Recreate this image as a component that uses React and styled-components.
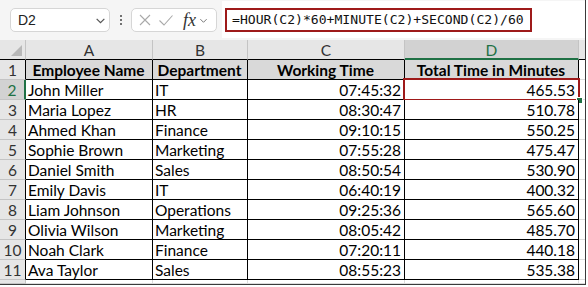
import React from "react";
import styled, { createGlobalStyle } from "styled-components";

const GREEN = "#1f7145";
const RED = "#9e1a1a";
const CELL_FONT = `"Lato", "Liberation Sans", sans-serif`;

const Global = createGlobalStyle`
  html, body {
    margin: 0;
    padding: 0;
    background: #ffffff;
  }
`;

const Frame = styled.div`
  width: 585px;
  height: 284px;
  border-right: 1px solid #3a3a3a;
  border-bottom: 1px solid #3a3a3a;
  background: #f5f5f5;
  overflow: hidden;
  display: flex;
  flex-direction: column;
`;

/* ---- formula bar ---- */

const Toolbar = styled.div`
  height: 40px;
  flex: none;
  display: flex;
  align-items: center;
  padding-left: 10px;
  box-sizing: border-box;
`;

const NameBox = styled.div`
  width: 100px;
  height: 24px;
  box-sizing: border-box;
  background: #fff;
  border: 1px solid #d6d6d6;
  border-radius: 5px;
  display: flex;
  align-items: center;
  justify-content: space-between;
  padding: 0 3px 0 7px;
  font-family: "Liberation Sans", sans-serif;
  font-size: 14px;
  color: #222;
`;

const Dots = styled.div`
  width: 21px;
  display: flex;
  flex-direction: column;
  align-items: center;
  gap: 2px;

  span {
    width: 2px;
    height: 2px;
    border-radius: 1px;
    background: #444;
  }
`;

const ActionBox = styled.div`
  width: 86px;
  height: 24px;
  box-sizing: border-box;
  background: #fff;
  border: 1px solid #d6d6d6;
  border-radius: 5px;
  display: flex;
  align-items: center;
  padding: 0 3px 0 6px;
  gap: 6px;
`;

const Fx = styled.span`
  font-family: "Liberation Serif", serif;
  font-style: italic;
  font-size: 18px;
  color: #333;
  line-height: 1;
  margin-left: 3px;
  margin-right: -3px;
`;

const FormulaField = styled.div`
  flex: 1;
  align-self: stretch;
  margin: 1px 0 2px 5px;
  background: #fff;
  display: flex;
  align-items: center;
  padding-left: 3px;
`;

const FormulaText = styled.div`
  height: 24px;
  box-sizing: border-box;
  border: 2px solid ${RED};
  padding: 0 6px 0 5px;
  display: flex;
  align-items: center;
  font-family: "DejaVu Sans Mono", monospace;
  font-size: 13.1px;
  color: #111;
`;

const Chevron = ({ size = 10, color = "#555" }) => (
  <svg width={size} height={size} viewBox="0 0 10 10">
    <polyline points="1.5,3.5 5,7 8.5,3.5" fill="none" stroke={color} strokeWidth="1.1" />
  </svg>
);

const Cross = () => (
  <svg width="14" height="14" viewBox="0 0 14 14">
    <path d="M2 2 L12 12 M12 2 L2 12" stroke="#a9a9a9" strokeWidth="1.1" fill="none" />
  </svg>
);

const Tick = () => (
  <svg width="16" height="14" viewBox="0 0 16 14">
    <polyline points="1.5,7.5 6,12 14.5,2.5" stroke="#a9a9a9" strokeWidth="1.1" fill="none" />
  </svg>
);

/* ---- sheet grid ---- */

const Sheet = styled.div`
  flex: 1;
  display: grid;
  grid-template-columns: 26px 127px 95px 157px 174px 6px;
  grid-template-rows: repeat(12, 20px) 1fr;
  background: #fff;
  font-family: ${CELL_FONT};
  font-size: 15.5px;
  color: #000;
`;

const Corner = styled.div`
  position: relative;
  background: #e6e6e6;
  border-right: 1px solid #c4c4c4;
  border-bottom: 1px solid #000;

  &::after {
    content: "";
    position: absolute;
    right: 3px;
    bottom: 3px;
    border-style: solid;
    border-width: 0 0 11px 11px;
    border-color: transparent transparent #b8b8b8 transparent;
  }
`;

const ColHead = styled.div`
  box-sizing: border-box;
  background: ${(p) => (p.$active ? "#d2d2d2" : "#e6e6e6")};
  color: ${(p) => (p.$active ? GREEN : "#333")};
  border-right: ${(p) => (p.$last ? "none" : "1px solid #c4c4c4")};
  border-bottom: ${(p) => (p.$active ? `2px solid ${GREEN}` : "1px solid #000")};
  display: flex;
  align-items: center;
  justify-content: center;
  padding-top: ${(p) => (p.$active ? "1px" : "0")};
`;

const RowHead = styled.div`
  box-sizing: border-box;
  background: ${(p) => (p.$active ? "#d2d2d2" : "#e6e6e6")};
  color: ${(p) => (p.$active ? GREEN : "#333")};
  border-bottom: 1px solid #c4c4c4;
  border-right: ${(p) =>
    p.$active ? `2px solid ${GREEN}` : p.$blank ? "1px solid #c4c4c4" : "1px solid #000"};
  display: flex;
  align-items: center;
  justify-content: center;
`;

const Cell = styled.div`
  position: relative;
  box-sizing: border-box;
  background: ${(p) => (p.$title ? "#d9d9d9" : "#fff")};
  font-weight: ${(p) => (p.$title ? 700 : 400)};
  border-right: 1px solid ${(p) => (p.$blank ? "#dcdcdc" : "#000")};
  border-bottom: 1px solid ${(p) => (p.$blank ? "#dcdcdc" : "#000")};
  display: flex;
  align-items: center;
  justify-content: ${(p) =>
    p.$title ? "center" : p.$align === "right" ? "flex-end" : "flex-start"};
  padding: 0 3px 0 2px;
  white-space: nowrap;
`;

const Spare = styled.div`
  border-bottom: 1px solid #dcdcdc;
  background: #fff;
`;

const Selection = styled.div`
  position: absolute;
  left: -2px;
  top: -2px;
  right: -2px;
  bottom: -2px;
  border: 2px solid ${RED};
  pointer-events: none;

  &::after {
    content: "";
    position: absolute;
    right: -5px;
    bottom: -5px;
    width: 5px;
    height: 5px;
    background: ${GREEN};
    border: 1px solid #fff;
  }
`;

const COLUMNS = ["A", "B", "C", "D"];
const TITLES = ["Employee Name", "Department", "Working Time", "Total Time in Minutes"];

const ROWS = [
  ["John Miller", "IT", "07:45:32", "465.53"],
  ["Maria Lopez", "HR", "08:30:47", "510.78"],
  ["Ahmed Khan", "Finance", "09:10:15", "550.25"],
  ["Sophie Brown", "Marketing", "07:55:28", "475.47"],
  ["Daniel Smith", "Sales", "08:50:54", "530.90"],
  ["Emily Davis", "IT", "06:40:19", "400.32"],
  ["Liam Johnson", "Operations", "09:25:36", "565.60"],
  ["Olivia Wilson", "Marketing", "08:05:42", "485.70"],
  ["Noah Clark", "Finance", "07:20:11", "440.18"],
  ["Ava Taylor", "Sales", "08:55:23", "535.38"],
];

export default function App() {
  return (
    <Frame>
      <Global />
      <Toolbar>
        <NameBox>
          D2
          <Chevron size={11} />
        </NameBox>
        <Dots>
          <span />
          <span />
          <span />
        </Dots>
        <ActionBox>
          <Cross />
          <Tick />
          <Fx>fx</Fx>
          <Chevron size={9} color="#777" />
        </ActionBox>
        <FormulaField>
          <FormulaText>=HOUR(C2)*60+MINUTE(C2)+SECOND(C2)/60</FormulaText>
        </FormulaField>
      </Toolbar>

      <Sheet>
        <Corner />
        {COLUMNS.map((c) => (
          <ColHead key={c} $active={c === "D"}>
            {c}
          </ColHead>
        ))}
        <ColHead $last />

        <RowHead>1</RowHead>
        {TITLES.map((t) => (
          <Cell key={t} $title>
            {t}
          </Cell>
        ))}
        <Spare />

        {ROWS.map((row, i) => (
          <React.Fragment key={row[0]}>
            <RowHead $active={i === 0}>{i + 2}</RowHead>
            <Cell>{row[0]}</Cell>
            <Cell>{row[1]}</Cell>
            <Cell $align="right">{row[2]}</Cell>
            <Cell $align="right">
              {row[3]}
              {i === 0 && <Selection />}
            </Cell>
            <Spare />
          </React.Fragment>
        ))}

        <RowHead $blank />
        <Cell $blank />
        <Cell $blank />
        <Cell $blank />
        <Cell $blank />
        <Spare />
      </Sheet>
    </Frame>
  );
}
